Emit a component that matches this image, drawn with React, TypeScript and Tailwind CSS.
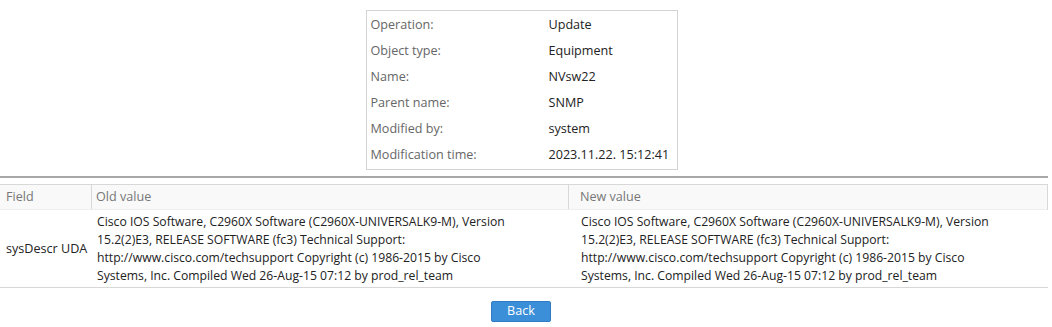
export default function App() {
  const rows: [string, string][] = [
    ["Operation:", "Update"],
    ["Object type:", "Equipment"],
    ["Name:", "NVsw22"],
    ["Parent name:", "SNMP"],
    ["Modified by:", "system"],
    ["Modification time:", "2023.11.22. 15:12:41"],
  ];
  const desc =
    "Cisco IOS Software, C2960X Software (C2960X-UNIVERSALK9-M), Version 15.2(2)E3, RELEASE SOFTWARE (fc3) Technical Support: http://www.cisco.com/techsupport Copyright (c) 1986-2015 by Cisco Systems, Inc. Compiled Wed 26-Aug-15 07:12 by prod_rel_team";
  return (
    <div
      className="w-[1052px] h-[327px] bg-white text-[12.6px] text-[#333]"
      style={{ fontFamily: '"Open Sans", sans-serif' }}
    >
      <div className="pt-[10px] flex justify-center">
        <div className="ml-[-9px] w-[312px] border border-[#d4d4d4] px-[4px] pt-[1px] pb-[1px]">
          {rows.map(([k, v]) => (
            <div key={k} className="flex h-[26px] items-center whitespace-nowrap">
              <div className="w-[178px] shrink-0 text-[#666]">{k}</div>
              <div className="text-[#222]">{v}</div>
            </div>
          ))}
        </div>
      </div>
      <div className="mt-[6px] w-[1048px] h-[2px] bg-[#a8a8a8]" />
      <div className="mt-[6px] w-[1048px] border border-[#d8d8d8] border-b-0 border-l-0">
        <div className="flex h-[25px] bg-[#f9f9f9] text-[#777] items-center border-b border-[#eee]">
          <div className="w-[92px] h-full flex items-center pl-[6px] border-r border-[#d8d8d8]">Field</div>
          <div className="w-[477px] h-full flex items-center pl-[4px] border-r border-[#d8d8d8]">Old value</div>
          <div className="flex-1 h-full flex items-center pl-[11px]">New value</div>
        </div>
      </div>
      <div className="w-[1048px] flex border-b border-[#d8d8d8] h-[78px] items-center leading-[18px] text-[12.2px]">
        <div className="w-[92px] pl-[6px] text-[#222] text-[12.6px]">sysDescr UDA</div>
        <div className="w-[477px] pl-[5px] text-[#222]">
          <div className="w-[420px]">{desc}</div>
        </div>
        <div className="flex-1 pl-[12px] text-[#222]">
          <div className="w-[420px]">{desc}</div>
        </div>
      </div>
      <div className="flex justify-center mt-[13px] ml-[-10px]">
        <button className="w-[60px] h-[21px] rounded-[2px] bg-[#3b8fd8] border border-[#2f7cc4] text-white text-[12.6px] leading-none">
          Back
        </button>
      </div>
    </div>
  );
}
